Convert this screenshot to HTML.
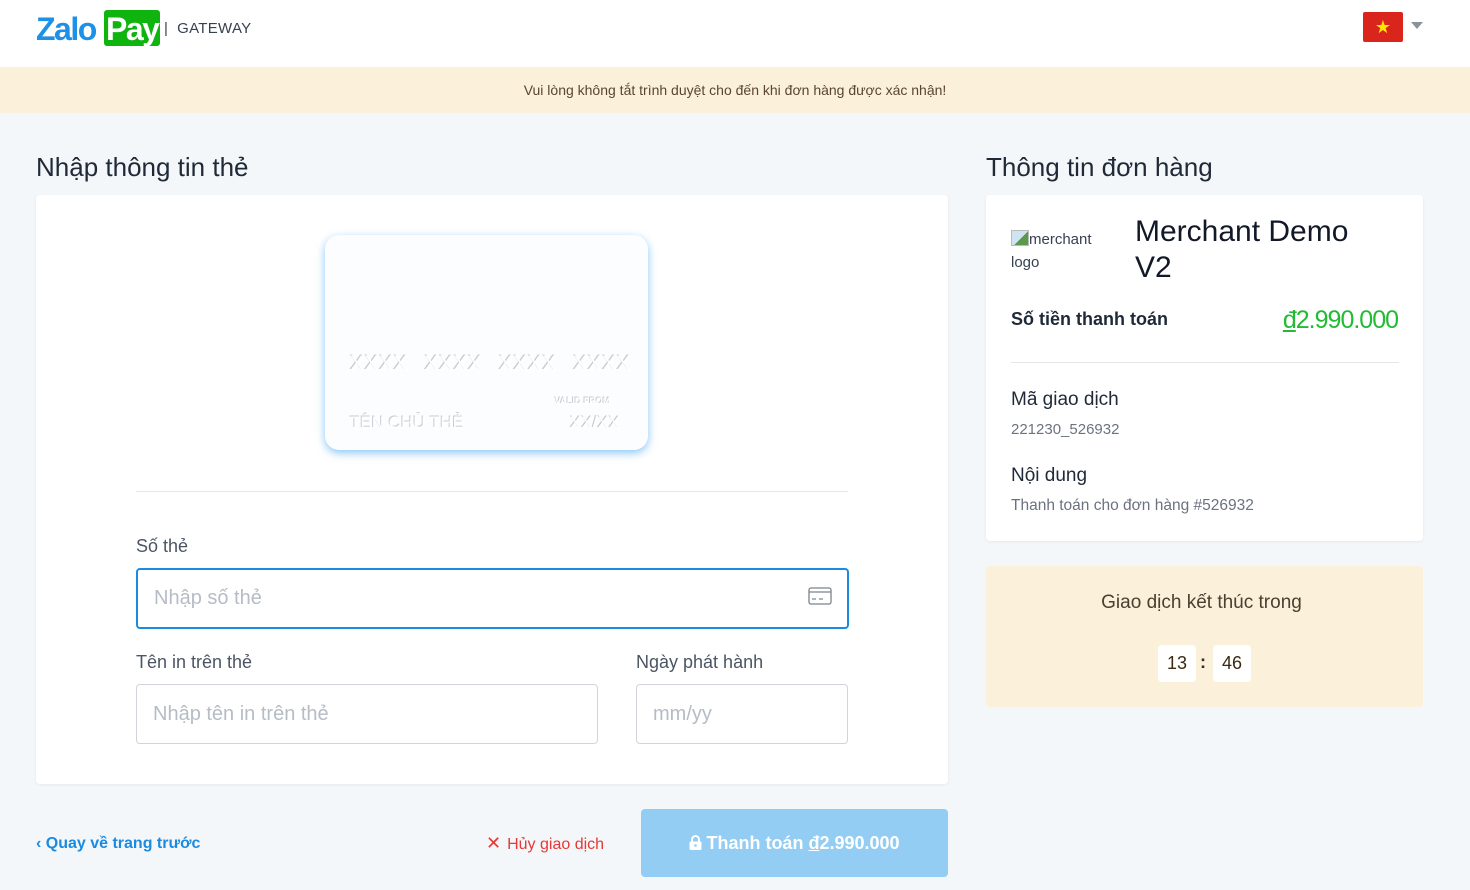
<!DOCTYPE html>
<html><head><meta charset="utf-8">
<style>
*{margin:0;padding:0;box-sizing:border-box}
body{width:1470px;height:890px;background:#f4f7fa;font-family:"Liberation Sans","DejaVu Sans",sans-serif;position:relative;overflow:hidden;color:#1f2937}
.abs{position:absolute}
.hdr{left:0;top:0;width:1470px;height:67px;background:#fff}
.banner{left:0;top:67px;width:1470px;height:46px;background:#fbf0da;text-align:center;line-height:46px;font-size:14px;color:#5a4630}
.box{background:#fff;border-radius:4px;box-shadow:0 1px 3px rgba(0,0,0,.06)}
.lbl{font-size:18px;color:#4b5563}
.inp{border:1px solid #d1d5db;border-radius:4px;background:#fff;font-size:20px;color:#b6bcc6;padding-left:16px;display:flex;align-items:center}
.emb{color:#fff;text-shadow:-1px -1px 0 #c8ccd2,1px 1px 0 #fff;letter-spacing:0px}
</style></head><body>
<div class="abs hdr"></div>
<div class="abs" style="left:36px;top:10px;font-size:32px;font-weight:bold;color:#1e90e6;letter-spacing:-1.5px;line-height:38px">Zalo</div>
<div class="abs" style="left:104px;top:10px;width:56px;height:36px;background:#0fb40f;border-radius:3px;color:#fff;font-size:32px;font-weight:bold;letter-spacing:-1.5px;line-height:38px;padding-left:2px">Pay</div>
<div class="abs" style="left:164px;top:20px;font-size:15px;color:#374151;letter-spacing:.3px">|&nbsp; GATEWAY</div>
<div class="abs" style="left:1363px;top:12px;width:40px;height:30px;background:#da251d;border-radius:2px;color:#ffe600;font-size:18px;text-align:center;line-height:30px">★</div>
<div class="abs" style="left:1411px;top:22px;width:0;height:0;border-left:6px solid transparent;border-right:6px solid transparent;border-top:7px solid #8a939c"></div>
<div class="abs banner">Vui lòng không tắt trình duyệt cho đến khi đơn hàng được xác nhận!</div>

<div class="abs" style="left:36px;top:152px;font-size:26px;color:#1f2937">Nhập thông tin thẻ</div>
<div class="abs" style="left:986px;top:152px;font-size:26px;color:#1f2937">Thông tin đơn hàng</div>

<div class="abs box" style="left:36px;top:195px;width:912px;height:589px"></div>
<div class="abs" style="left:325px;top:235px;width:323px;height:215px;background:#fcfdff;border-radius:14px;box-shadow:0 3px 9px rgba(60,160,240,.6)"></div>
<div class="abs emb" style="left:350px;top:352px;font-size:21px;word-spacing:10px;letter-spacing:.5px">XXXX XXXX XXXX XXXX</div>
<div class="abs emb" style="left:555px;top:396px;font-size:9px;font-weight:bold">VALID FROM</div>
<div class="abs emb" style="left:350px;top:413px;font-size:17px">TÊN CHỦ THẺ</div>
<div class="abs emb" style="left:570px;top:413px;font-size:17px">XX/XX</div>
<div class="abs" style="left:136px;top:491px;width:712px;height:1px;background:#e5e7eb"></div>

<div class="abs lbl" style="left:136px;top:536px">Số thẻ</div>
<div class="abs inp" style="left:136px;top:568px;width:713px;height:61px;border:2px solid #1a8be0">Nhập số thẻ</div>
<svg class="abs" style="left:808px;top:587px" width="24" height="18" viewBox="0 0 24 18"><rect x="1" y="1" width="22" height="16" rx="2" fill="none" stroke="#7a828c" stroke-width="1.3"/><line x1="1" y1="5" x2="23" y2="5" stroke="#7a828c" stroke-width="1.3"/><line x1="4" y1="12" x2="8" y2="12" stroke="#7a828c" stroke-width="1.2"/><line x1="11" y1="12" x2="15" y2="12" stroke="#7a828c" stroke-width="1.2"/></svg>

<div class="abs lbl" style="left:136px;top:652px">Tên in trên thẻ</div>
<div class="abs inp" style="left:136px;top:684px;width:462px;height:60px">Nhập tên in trên thẻ</div>
<div class="abs lbl" style="left:636px;top:652px">Ngày phát hành</div>
<div class="abs inp" style="left:636px;top:684px;width:212px;height:60px">mm/yy</div>

<div class="abs" style="left:36px;top:835px;font-size:16px;color:#1a8be0;font-weight:bold">‹ Quay về trang trước</div>
<div class="abs" style="left:486px;top:833px;font-size:16px;color:#e53935"><span style="font-size:18px;margin-right:6px">✕</span>Hủy giao dịch</div>
<div class="abs" style="left:641px;top:809px;width:307px;height:68px;background:#93cdf3;border-radius:4px;color:#fff;font-size:18px;font-weight:bold;text-align:center;line-height:68px">
<svg width="13" height="15" viewBox="0 0 13 15" style="vertical-align:-1px;margin-right:4px"><path d="M3 7V4.5a3.5 3.5 0 0 1 7 0V7" fill="none" stroke="#fff" stroke-width="2"/><rect x="0.5" y="6.5" width="12" height="8.5" rx="1.5" fill="#fff"/><circle cx="6.5" cy="10.5" r="1.3" fill="#93cdf3"/></svg>Thanh toán <u>đ</u>2.990.000</div>

<div class="abs box" style="left:986px;top:195px;width:437px;height:346px"></div>
<div class="abs" style="left:1011px;top:228px;font-size:15px;color:#374151;line-height:23px;width:100px"><span style="display:inline-block;width:18px;height:16px;background:linear-gradient(135deg,#cfe3f3 55%,#5a9a4a 55%);vertical-align:-2px;border:1px solid #bbb"></span>merchant logo</div>
<div class="abs" style="left:1135px;top:214px;font-size:30px;color:#111827;line-height:36px;width:225px">Merchant Demo V2</div>
<div class="abs" style="left:1011px;top:309px;font-size:18px;font-weight:bold;color:#1f2937">Số tiền thanh toán</div>
<div class="abs" style="right:72px;top:306px;font-size:25px;color:#22bb33;letter-spacing:-1px"><u>đ</u>2.990.000</div>
<div class="abs" style="left:1011px;top:362px;width:388px;height:1px;background:#e5e7eb"></div>
<div class="abs" style="left:1011px;top:389px;font-size:19px;color:#1f2937">Mã giao dịch</div>
<div class="abs" style="left:1011px;top:421px;font-size:15px;color:#6b7280">221230_526932</div>
<div class="abs" style="left:1011px;top:465px;font-size:19px;color:#1f2937">Nội dung</div>
<div class="abs" style="left:1011px;top:497px;font-size:15.5px;color:#6b7280">Thanh toán cho đơn hàng #526932</div>

<div class="abs" style="left:986px;top:566px;width:437px;height:141px;background:#fbf0da;border-radius:4px"></div>
<div class="abs" style="left:986px;top:592px;width:431px;text-align:center;font-size:19px;color:#4b4030">Giao dịch kết thúc trong</div>
<div class="abs" style="left:1158px;top:645px;width:38px;height:37px;background:#fff;border-radius:4px;text-align:center;line-height:37px;font-size:18px;color:#3b2a10">13</div>
<div class="abs" style="left:1200px;top:652px;font-size:18px;font-weight:bold;color:#3b2a10">:</div>
<div class="abs" style="left:1213px;top:645px;width:38px;height:37px;background:#fff;border-radius:4px;text-align:center;line-height:37px;font-size:18px;color:#3b2a10">46</div>
</body></html>
